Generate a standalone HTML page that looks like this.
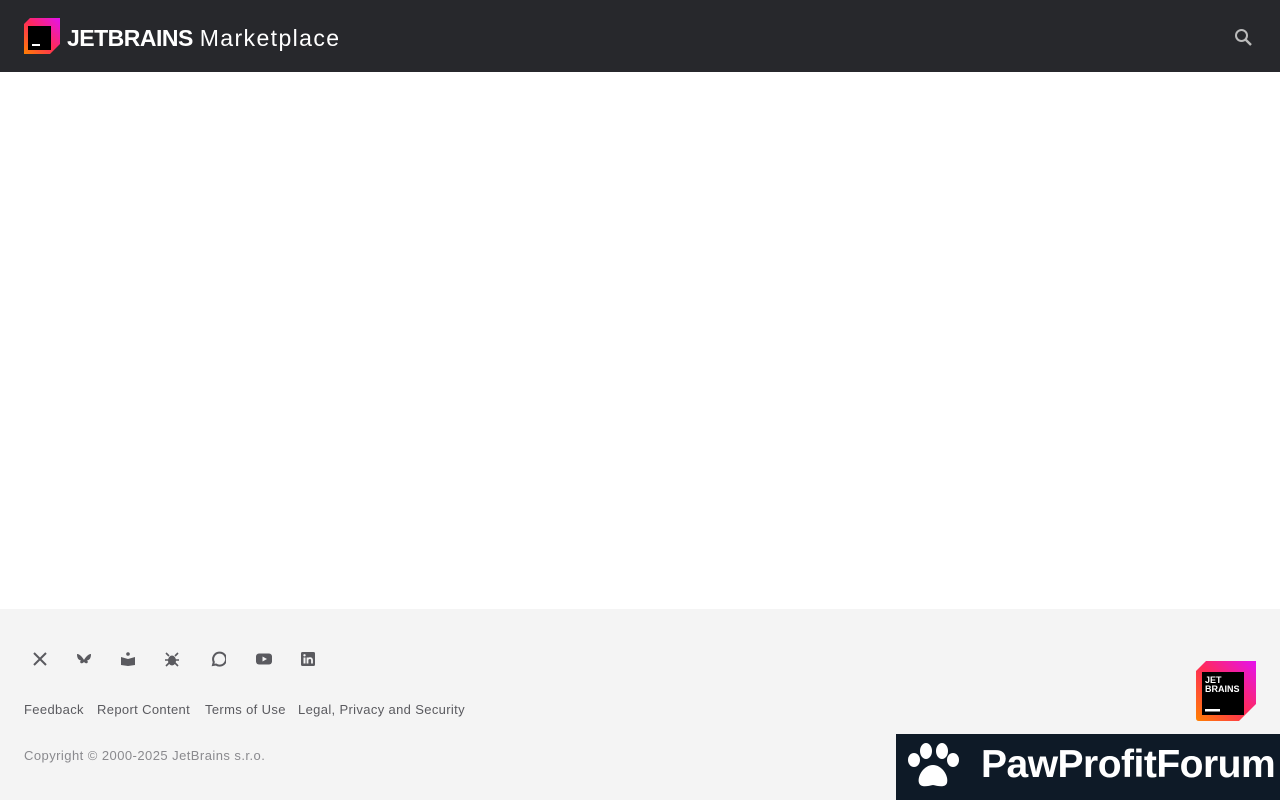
<!DOCTYPE html>
<html><head><meta charset="utf-8"><style>
*{margin:0;padding:0;box-sizing:border-box}
body{width:1280px;height:800px;background:#fff;font-family:"Liberation Sans",sans-serif;position:relative;overflow:hidden}
.hdr{position:absolute;left:0;top:0;width:1280px;height:72px;background:#27282c}
.ft{position:absolute;left:0;top:609px;width:1280px;height:191px;background:#f4f4f4}
.t{position:absolute;white-space:nowrap}
.links span{position:absolute;top:702px;font-size:13px;color:#5a5a5f;letter-spacing:0.35px}
.ic{position:absolute;top:651px;width:16px;height:16px}
</style></head><body>
<div class="hdr">
<svg style="position:absolute;left:24px;top:18px" width="36" height="36" viewBox="0 0 36 36">
<defs><linearGradient id="g" x1="0" y1="1" x2="1" y2="0"><stop offset="0" stop-color="#ff8100"/><stop offset=".5" stop-color="#ff2a5a"/><stop offset="1" stop-color="#e412f0"/></linearGradient></defs>
<path d="M6 0H36V26L26 36H0V6Z" fill="url(#g)"/><rect x="4" y="8" width="23" height="24" fill="#000"/><rect x="8" y="26" width="8" height="2" fill="#fff"/></svg>
<div class="t" style="left:67px;top:25px;font-size:23px;font-weight:bold;color:#fff;letter-spacing:-0.5px">JETBRAINS <span style="font-weight:normal;letter-spacing:1.4px;margin-left:1px">Marketplace</span></div>
<svg style="position:absolute;left:1234px;top:28px" width="20" height="20" viewBox="0 0 20 20"><circle cx="7.5" cy="7.5" r="5.5" stroke="#bbb" stroke-width="2" fill="none"/><path d="M11.5 11.5L17 17" stroke="#bbb" stroke-width="2.4"/></svg>
</div>
<div class="ft"></div>
<svg class="ic" style="left:32px" viewBox="0 0 16 16"><path d="M2 2L14 14M14 2L2 14" stroke="#5a5a5f" stroke-width="2"/></svg>
<svg class="ic" style="left:76px" viewBox="0 0 16 16"><path d="M1 3C4 3 7 7 8 9C9 7 12 3 15 3C15 8 13 9 11 9.5C13 11 11 14 8 11C5 14 3 11 5 9.5C3 9 1 8 1 3Z" fill="#5a5a5f"/></svg>
<svg class="ic" style="left:120px" viewBox="0 0 16 16"><circle cx="8" cy="3" r="1.8" fill="#5a5a5f"/><path d="M1 6L8 8L15 6V14L8 15L1 14Z" fill="#5a5a5f"/></svg>
<svg class="ic" style="left:164px" viewBox="0 0 16 16"><ellipse cx="8" cy="9.5" rx="4" ry="5" fill="#5a5a5f"/><path d="M2 2L5 5M14 2L11 5M1 9H15M2 15L5 12M14 15L11 12" stroke="#5a5a5f" stroke-width="1.6"/></svg>
<svg class="ic" style="left:210px" viewBox="0 0 16 16"><path d="M3 14L3.8 11A6.5 6.5 0 1 1 6 13.5Z" fill="none" stroke="#5a5a5f" stroke-width="2"/></svg>
<svg class="ic" style="left:256px" viewBox="0 0 16 16"><rect x="0" y="2.5" width="16" height="11" rx="3" fill="#5a5a5f"/><path d="M6.5 5.5L11 8L6.5 10.5Z" fill="#f4f4f4"/></svg>
<svg class="ic" style="left:300px" viewBox="0 0 16 16"><rect x="1" y="1" width="14" height="14" rx="1.5" fill="#5a5a5f"/><rect x="3.5" y="6.5" width="2" height="6" fill="#f4f4f4"/><circle cx="4.5" cy="4.3" r="1.2" fill="#f4f4f4"/><path d="M7.5 6.5V12.5M7.5 9C7.5 7 12 6 12 9V12.5" stroke="#f4f4f4" stroke-width="1.8" fill="none"/></svg>
<div class="links"><span style="left:24px">Feedback</span><span style="left:97px">Report Content</span><span style="left:205px">Terms of Use</span><span style="left:298px">Legal, Privacy and Security</span></div>
<div class="t" style="left:24px;top:748px;font-size:13px;color:#8a8a8e;letter-spacing:0.45px">Copyright © 2000-2025 JetBrains s.r.o.</div>
<svg style="position:absolute;left:1196px;top:661px" width="60" height="60" viewBox="0 0 60 60">
<defs><linearGradient id="g2" x1="0" y1="1" x2="1" y2="0"><stop offset="0" stop-color="#ff8100"/><stop offset=".5" stop-color="#ff2a5a"/><stop offset="1" stop-color="#e412f0"/></linearGradient></defs>
<path d="M10 0H60V43L43 60H3Q0 60 0 57V10Z" fill="url(#g2)"/><rect x="6" y="11" width="42" height="43" fill="#000"/>
<text x="9" y="22" font-family="Liberation Sans" font-weight="bold" font-size="9" fill="#fff">JET</text>
<text x="9" y="31" font-family="Liberation Sans" font-weight="bold" font-size="9" fill="#fff">BRAINS</text>
<rect x="9" y="48" width="15" height="2.5" fill="#fff"/></svg>
<div style="position:absolute;left:896px;top:734px;width:384px;height:66px;background:#0e1a27"></div>
<svg style="position:absolute;left:904px;top:738px" width="58" height="56" viewBox="0 0 58 56">
<ellipse cx="10" cy="22" rx="6" ry="7" fill="#fff"/><ellipse cx="22" cy="13" rx="6" ry="8" fill="#fff"/><ellipse cx="38" cy="13" rx="6" ry="8" fill="#fff"/><ellipse cx="49" cy="22" rx="6" ry="7" fill="#fff"/>
<path d="M29 27C20 27 13 38 15 45C17 50 24 48 29 47C34 48 41 50 43 45C45 38 38 27 29 27Z" fill="#fff"/></svg>
<div class="t" style="left:981px;top:743px;font-size:39px;font-weight:bold;color:#fff;letter-spacing:-0.5px">PawProfitForum</div>
</body></html>
